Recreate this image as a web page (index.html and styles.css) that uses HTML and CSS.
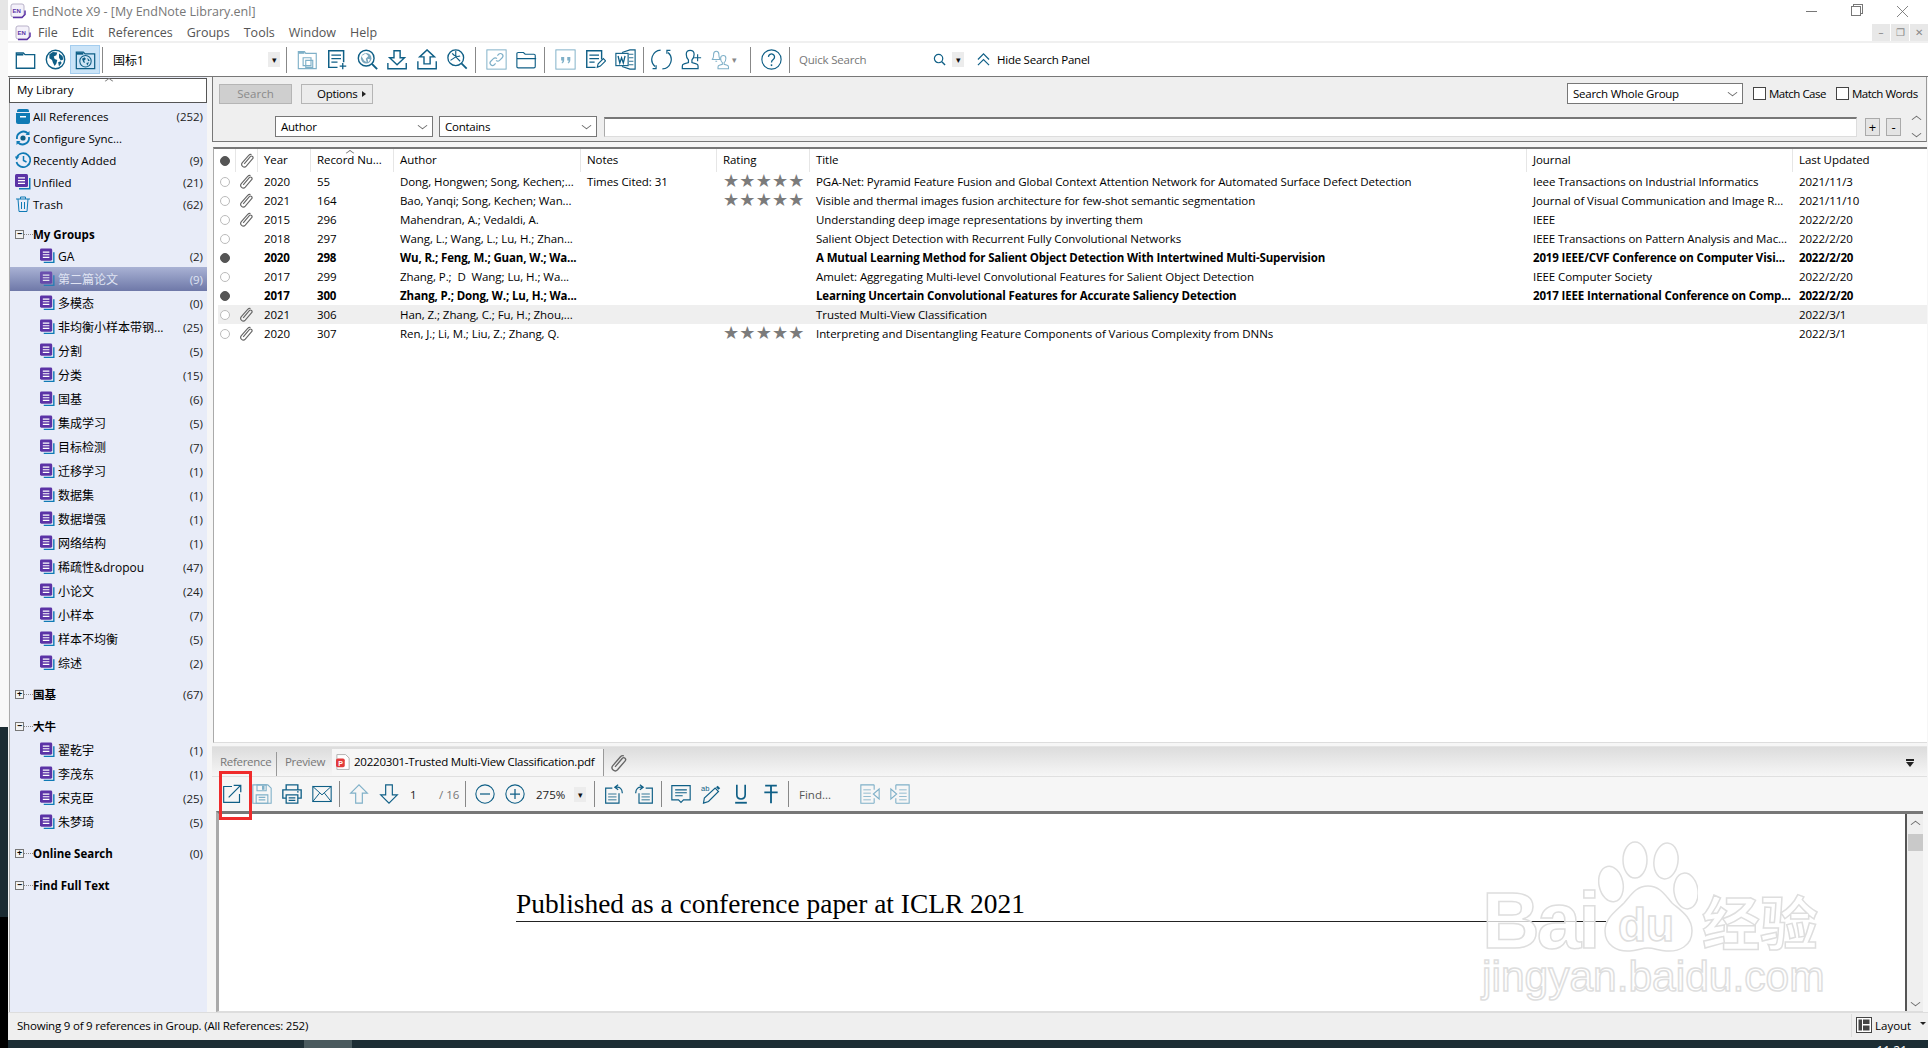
FILE: index.html
```html
<!DOCTYPE html>
<html lang="en">
<head>
    <meta charset="UTF-8">
    <meta name="viewport" content="width=device-width, initial-scale=1.0">
    <title>EndNote X9 - [My EndNote Library.enl]</title>
    <link rel="stylesheet" href="styles.css">
</head>
<body>
<svg class="defs" xmlns="http://www.w3.org/2000/svg">
    <symbol id="i-en" viewBox="0 0 16 16"><rect x="1" y="1" width="13" height="13" rx="2" fill="#f4f1fa" stroke="#b9b2c9"/><path d="M3 14.5h9l3-3v-4" fill="none" stroke="#5b33a6" stroke-width="1.5"/><text x="2.6" y="10.4" class="en-text">EN</text></symbol>
    <symbol id="i-folder" viewBox="0 0 24 24"><path d="M1.5 22V4.5h8l2 2h11V22z" fill="none" stroke="currentColor" stroke-width="1.5"/><path d="M1.5 5h8v2.5h-8z" fill="currentColor"/></symbol>
    <symbol id="i-globe" viewBox="0 0 24 24"><circle cx="12" cy="12" r="10.5" fill="#fff" stroke="currentColor" stroke-width="1.6"/><path d="M5 6l4-2.5 5 .5-1 3-3 1.5 1 3 3 1-1 4-2 3-2-4-1-3-3-2zM16 5l4 3 1 4-3 1-2-3zM15 15l3-1 1 2-3 4z" fill="currentColor"/></symbol>
    <symbol id="i-online" viewBox="0 0 24 24"><path d="M1.5 22.5V3.5h8l2 2h11v17z" fill="none" stroke="currentColor" stroke-width="1.4"/><path d="M1.5 4h8v2.5h-8z" fill="currentColor"/><circle cx="12" cy="14" r="6.5" fill="#cfe5f5" stroke="currentColor" stroke-width="1.2"/><path d="M8 11l3-1.5 1.500 2-2 1.500 1 3-2-1zM14 10l3 3-2 1zM13 16l3-1-2 4z" fill="currentColor"/></symbol>
    <symbol id="i-copy" viewBox="0 0 24 24"><path d="M1.500 22.500V3h7l1.500 2h12v17.500z" fill="none" stroke="currentColor" stroke-width="1.300"/><path d="M1.500 3h7v2.500h-7z" fill="currentColor"/><path d="M7 10h9v9H7zM10 13h8v8h-8z" fill="#fff" stroke="currentColor" stroke-width="1.300"/></symbol>
    <symbol id="i-newref" viewBox="0 0 24 24"><path d="M12 21H2V2h17v13" fill="none" stroke="currentColor" stroke-width="1.700"/><path d="M5 7h11M5 11h11M5 15h7M18 16v7M14.500 19.500h7.500" fill="none" stroke="currentColor" stroke-width="1.500"/></symbol>
    <symbol id="i-findtext" viewBox="0 0 24 24"><circle cx="10.500" cy="10.500" r="9" fill="none" stroke="currentColor" stroke-width="1.600"/><circle cx="10.500" cy="10.500" r="6" fill="currentColor" opacity=".55"/><path d="M5 8l5-3 3 3-3 3 1 4-3-2zM12 11l3 1-2 3z" fill="#fff"/><path d="M17 17l6 6" stroke="currentColor" stroke-width="2.200"/></symbol>
    <symbol id="i-import" viewBox="0 0 24 24"><path d="M8 2h7v8h5l-8.500 8L3 10h5zM1 16v6.500h21V16" fill="none" stroke="currentColor" stroke-width="1.600"/></symbol>
    <symbol id="i-export" viewBox="0 0 24 24"><path d="M8 17V9H3l8.500-8L20 9h-5v8zM1 14v8.500h21V14" fill="none" stroke="currentColor" stroke-width="1.600"/></symbol>
    <symbol id="i-findpdf" viewBox="0 0 24 24"><circle cx="10" cy="10" r="9" fill="none" stroke="currentColor" stroke-width="1.500"/><path d="M10 2v7l5 5M10 9l-6 4M6 5c2 3 6 4 9 3" fill="none" stroke="currentColor" stroke-width="1.300"/><path d="M16.500 16.500l6 6" stroke="currentColor" stroke-width="2"/></symbol>
    <symbol id="i-link" viewBox="0 0 24 24"><rect x="1" y="1" width="22" height="22" fill="none" stroke="currentColor" stroke-width="1.100"/><path d="M11 16.500l-1.500 1.500a2.800 2.800 0 0 1-4-4l3-3a2.800 2.800 0 0 1 4 0M13 7.500L14.500 6a2.800 2.800 0 0 1 4 4l-3 3a2.800 2.800 0 0 1-4 0" fill="none" stroke="currentColor" stroke-width="1.300"/></symbol>
    <symbol id="i-openfolder" viewBox="0 0 24 24"><path d="M1 20V5.500q0-1.500 1.500-1.500h6l2 2h10q1.500 0 1.500 1.500V20q0 1.500-1.500 1.500h-18Q1 21.500 1 20zM1 11h22" fill="none" stroke="currentColor" stroke-width="1.300"/></symbol>
    <symbol id="i-cite" viewBox="0 0 24 24"><rect x="1" y="1" width="22" height="22" fill="none" stroke="currentColor" stroke-width="1.100"/><path d="M7 9h3.500v3.500c0 2-1 3.500-2.500 4l-.5-1c1-.5 1-1.500 1-2.500H7zM14 9h3.500v3.500c0 2-1 3.500-2.500 4l-.5-1c1-.5 1-1.500 1-2.500H14z" fill="currentColor"/></symbol>
    <symbol id="i-editcite" viewBox="0 0 24 24"><path d="M12 21H2V2h17v10" fill="none" stroke="currentColor" stroke-width="1.600"/><path d="M5 7h11M5 11h11M5 15h6" stroke="currentColor" stroke-width="1.500"/><path d="M14 21l1-4 6-6 2.500 2.500-6 6z" fill="#fff" stroke="currentColor" stroke-width="1.300"/></symbol>
    <symbol id="i-word" viewBox="0 0 24 24"><path d="M8 4l9-3h6v22h-6l-9-3" fill="none" stroke="currentColor" stroke-width="1.300"/><path d="M16 6h5M16 10h5M16 14h5M16 18h5" stroke="currentColor"/><rect x="1" y="5" width="14" height="14" fill="#fff" stroke="currentColor" stroke-width="1.300"/><path d="M3.500 8l2 8 2-6 2 6 2-8" fill="none" stroke="currentColor" stroke-width="1.500"/></symbol>
    <symbol id="i-sync" viewBox="0 0 24 24"><path d="M4.500 20A10.800 10.800 0 0 1 11 1.200M19.500 4A10.800 10.800 0 0 1 13 22.800" fill="none" stroke="currentColor" stroke-width="1.400"/><path d="M1.800 22.500h4v-4M22.200 1.500h-4v4" fill="none" stroke="currentColor" stroke-width="1.400"/></symbol>
    <symbol id="i-user" viewBox="0 0 24 24"><path d="M1.500 22.500v-3q0-2 2-2.500l5-1.500v-3C6 10 6 7.500 6 6c0-3 2-4.500 4.500-4.500S15 3 15 6c0 2 0 4-2.500 6.500v3l5 1.500q2 .5 2 2.500v3z" fill="none" stroke="currentColor" stroke-width="1.400"/><path d="M19 6v8M15 10h8" stroke="currentColor" stroke-width="1.300"/></symbol>
    <symbol id="i-bell" viewBox="0 0 24 24"><path d="M1 12c2-1 2-3 2-6 0-2 1.500-3.500 3-3.500S9 4 9 6c0 3 0 5 2 6zM5 14h2" fill="none" stroke="currentColor" stroke-width="1.200"/><path d="M8 22.500v-2q0-1.500 1.500-2l3.500-1v-2c-2-1.500-2-3.500-2-5 0-2 1.500-3 3-3s3 1 3 3c0 1.500 0 3.500-2 5v2l3.500 1q1.500.5 1.500 2v2z" fill="none" stroke="currentColor" stroke-width="1.200"/></symbol>
    <symbol id="i-help" viewBox="0 0 24 24"><circle cx="12" cy="12" r="11" fill="none" stroke="currentColor" stroke-width="1.300"/><path d="M8.500 9a3.500 3.500 0 1 1 5.500 3c-1.500 1-2 1.500-2 3.500" fill="none" stroke="currentColor" stroke-width="1.500"/><path d="M12 17.500v2" stroke="currentColor" stroke-width="1.700"/></symbol>
    <symbol id="i-lens" viewBox="0 0 14 14"><circle cx="6" cy="6" r="4.500" fill="none" stroke="currentColor" stroke-width="1.300"/><path d="M9.500 9.500l3.500 3.500" stroke="currentColor" stroke-width="1.500"/></symbol>
    <symbol id="i-chevrons" viewBox="0 0 14 14"><path d="M1 7l6-6 6 6M1 13l6-6 6 6" fill="none" stroke="currentColor" stroke-width="1.300"/></symbol>
    <symbol id="i-library" viewBox="0 0 16 16"><path d="M2 3q0-2 2-2h8q2 0 2 2v1H2z" fill="#0f7ab5"/><path d="M1 5h14v9q0 2-2 2H3q-2 0-2-2z" fill="#0f7ab5"/><path d="M5 8h6v1.500H5z" fill="#fff"/></symbol>
    <symbol id="i-cfg" viewBox="0 0 16 16"><path d="M2 9A6.500 6.500 0 0 1 13 3.500M14 7A6.500 6.500 0 0 1 3 12.500" fill="none" stroke="#0f7ab5" stroke-width="1.800"/><path d="M14.500 1v4h-4zM1.500 15v-4h4z" fill="#0f7ab5"/><circle cx="8" cy="8" r="2.600" fill="#0f5f86"/></symbol>
    <symbol id="i-recent" viewBox="0 0 16 16"><path d="M2 5A7 7 0 1 1 1.500 10" fill="none" stroke="#0f7ab5" stroke-width="1.700"/><path d="M0 4.500h4.500L1.500 8z" fill="#0f7ab5"/><path d="M8.500 4v4.500l3 1.500" fill="none" stroke="#0f7ab5" stroke-width="1.500"/></symbol>
    <symbol id="i-group" viewBox="0 0 16 16"><path d="M14 4h1.500v11.500H4V14h10z" fill="#0f7ab5"/><rect x="0" y="0" width="13" height="13" rx="1.500" fill="#5b33a6"/><path d="M3 3.200h7v1.300H3zM3 6h7v1.300H3zM3 8.800h7v1.300H3z" fill="#fff"/></symbol>
    <symbol id="i-trash" viewBox="0 0 16 16"><path d="M1 3h14M5.500 3V1h5v2M3 3l1 12.500h8L13 3M6.500 6v7M9.500 6v7" fill="none" stroke="#0f7ab5" stroke-width="1"/></symbol>
    <symbol id="i-clip" viewBox="0 0 16 16"><path d="M4.500 11.500L11 3.800a1.700 1.700 0 0 1 2.500 2.300L6.700 14a2.800 2.800 0 0 1-4.200-3.700L9.300 2.500a3 3 0 0 1 3-.9" fill="none" stroke="#666" stroke-width="1.200"/></symbol>
    <symbol id="i-pdf" viewBox="0 0 16 18"><path d="M1 .5h10l4 4v13H1z" fill="#fff" stroke="#aaa"/><rect x="0" y="5" width="10" height="10" rx="2" fill="#e23b3b"/><text x="2.500" y="13" class="pdf-text">P</text></symbol>
    <symbol id="i-open" viewBox="0 0 24 24"><path d="M12 3H2v19h19V12" fill="none" stroke="currentColor" stroke-width="1.400"/><path d="M8 16L22 2M14 1.500h8.500V10" fill="none" stroke="currentColor" stroke-width="1.500"/></symbol>
    <symbol id="i-save" viewBox="0 0 24 24"><path d="M1 1h18l4 4v18H1z" fill="none" stroke="currentColor" stroke-width="1.300"/><path d="M6 1h11v7H6zM5 13h14v10H5zM8 16h8M8 19h8" fill="none" stroke="currentColor" stroke-width="1.300"/><path d="M12 2h3v5h-3z" fill="currentColor"/></symbol>
    <symbol id="i-print" viewBox="0 0 24 24"><path d="M5 7V1h14v6M5 17H1V7h22v10h-4" fill="none" stroke="currentColor" stroke-width="1.600"/><path d="M5 13h14v10H5zM8 16.500h8M8 19.500h8" fill="none" stroke="currentColor" stroke-width="1.500"/><path d="M18 9.500h2" stroke="currentColor" stroke-width="1.500"/></symbol>
    <symbol id="i-mail" viewBox="0 0 24 24"><rect x="1" y="3" width="22" height="18" fill="none" stroke="currentColor" stroke-width="1.300"/><path d="M1 3l11 10L23 3M1 21l8-10M23 21l-8-10" fill="none" stroke="currentColor" stroke-width="1.200"/></symbol>
    <symbol id="i-up" viewBox="0 0 24 24"><path d="M8 23V11H2L12 1l10 10h-6v12z" fill="none" stroke="currentColor" stroke-width="1.400"/></symbol>
    <symbol id="i-down" viewBox="0 0 24 24"><path d="M8 1v12H2l10 10 10-10h-6V1z" fill="none" stroke="currentColor" stroke-width="1.400"/></symbol>
    <symbol id="i-minus" viewBox="0 0 24 24"><circle cx="12" cy="12" r="11" fill="none" stroke="currentColor" stroke-width="1.300"/><path d="M6 12h12" stroke="currentColor" stroke-width="1.500"/></symbol>
    <symbol id="i-plus" viewBox="0 0 24 24"><circle cx="12" cy="12" r="11" fill="none" stroke="currentColor" stroke-width="1.300"/><path d="M6 12h12M12 6v12" stroke="currentColor" stroke-width="1.500"/></symbol>
    <symbol id="i-rotl" viewBox="0 0 24 24"><path d="M10 5H2v18h16V11" fill="none" stroke="currentColor" stroke-width="1.400"/><path d="M5 12h10M5 15.500h10M5 19h10" stroke="currentColor"/><path d="M22 11c0-5-3-8-8-7M17 1l-4 3 4 3" fill="none" stroke="currentColor" stroke-width="1.500"/></symbol>
    <symbol id="i-rotr" viewBox="0 0 24 24"><path d="M14 5h8v18H6V11" fill="none" stroke="currentColor" stroke-width="1.400"/><path d="M9 12h10M9 15.500h10M9 19h10" stroke="currentColor"/><path d="M2 11c0-5 3-8 8-7M7 1l4 3-4 3" fill="none" stroke="currentColor" stroke-width="1.500"/></symbol>
    <symbol id="i-note" viewBox="0 0 24 24"><path d="M1 2h22v17h-8l-3 3-3-3H1z" fill="none" stroke="currentColor" stroke-width="1.400"/><path d="M5 7h14M5 10.500h14M5 14h9" stroke="currentColor" stroke-width="1.300"/></symbol>
    <symbol id="i-marker" viewBox="0 0 24 24"><path d="M3 23l1-6L17 5l4 4L9 21z" fill="none" stroke="currentColor" stroke-width="1.400"/><path d="M18 4l2-2 3 3-2 2z" fill="currentColor"/><text x="0" y="8" class="ab-text">ab</text></symbol>
    <symbol id="i-underline" viewBox="0 0 16 24"><path d="M3 1v12q0 5 5 5t5-5V1" fill="none" stroke="currentColor" stroke-width="2"/><path d="M1 22.500h14" stroke="currentColor" stroke-width="2.200"/></symbol>
    <symbol id="i-strike" viewBox="0 0 16 24"><path d="M1 2h14M8 2v21M0 10h16" fill="none" stroke="currentColor" stroke-width="2.200"/></symbol>
    <symbol id="i-prevhit" viewBox="0 0 24 24"><path d="M17 1H1v22h16M17 1v6M17 23v-6" fill="none" stroke="currentColor" stroke-width="1.300"/><path d="M4 7h9M4 11h9M4 15h9M4 19h9" stroke="currentColor"/><path d="M23 6l-7 6 7 6z" fill="none" stroke="currentColor" stroke-width="1.300"/></symbol>
    <symbol id="i-nexthit" viewBox="0 0 24 24"><path d="M7 1h16v22H7M7 1v6M7 23v-6" fill="none" stroke="currentColor" stroke-width="1.300"/><path d="M11 7h9M11 11h9M11 15h9M11 19h9" stroke="currentColor"/><path d="M1 6l7 6-7 6z" fill="none" stroke="currentColor" stroke-width="1.300"/></symbol>
    <symbol id="i-layout" viewBox="0 0 16 16"><rect x=".5" y=".5" width="15" height="15" fill="#fff" stroke="#444"/><path d="M2.500 2.500h3.500v11H2.500zM7 2.500h6.500V7H7zM7 8.500h6.500v5H7z" fill="#444"/></symbol>
</svg>

<div class="screen">
    <div class="edge">
        <div class="edge-top"></div>
        <div class="edge-mid"></div>
        <div class="edge-dark"></div>
        <div class="edge-black"></div>
    </div>

    <div class="app">
        <div class="titlebar">
            <svg class="en-icon"><use href="#i-en"/></svg>
            <span class="title-text">EndNote X9 - [My EndNote Library.enl]</span>
            <div class="win-controls">
                <span class="win-min"></span>
                <span class="win-max"></span>
                <svg class="win-close" viewBox="0 0 11 11"><path d="M0 0l11 11M11 0L0 11" stroke="#666" stroke-width=".8"/></svg>
            </div>
        </div>

        <div class="menubar">
            <svg class="en-icon menu-icon"><use href="#i-en"/></svg>
            <span class="menu-item">File</span>
            <span class="menu-item">Edit</span>
            <span class="menu-item">References</span>
            <span class="menu-item">Groups</span>
            <span class="menu-item">Tools</span>
            <span class="menu-item">Window</span>
            <span class="menu-item">Help</span>
            <div class="mdi-controls">
                <span class="mdi-btn">&#8211;</span>
                <span class="mdi-btn">&#10064;</span>
                <span class="mdi-btn">&#10005;</span>
            </div>
        </div>

        <!-- Barra de herramientas -->
        <div class="toolbar">
            <span class="tool"><svg class="ic"><use href="#i-folder"/></svg></span>
            <span class="tool"><svg class="ic"><use href="#i-globe"/></svg></span>
            <span class="tool tool-on"><svg class="ic"><use href="#i-online"/></svg></span>
            <span class="sep sep-first"></span>
            <div class="style-combo">
                <span>国标1</span>
                <span class="mini-drop">&#9662;</span>
            </div>
            <span class="sep"></span>
            <span class="tool dim"><svg class="ic"><use href="#i-copy"/></svg></span>
            <span class="tool"><svg class="ic"><use href="#i-newref"/></svg></span>
            <span class="tool"><svg class="ic"><use href="#i-findtext"/></svg></span>
            <span class="tool"><svg class="ic"><use href="#i-import"/></svg></span>
            <span class="tool"><svg class="ic"><use href="#i-export"/></svg></span>
            <span class="tool"><svg class="ic"><use href="#i-findpdf"/></svg></span>
            <span class="sep"></span>
            <span class="tool dim"><svg class="ic"><use href="#i-link"/></svg></span>
            <span class="tool"><svg class="ic"><use href="#i-openfolder"/></svg></span>
            <span class="sep"></span>
            <span class="tool dim"><svg class="ic"><use href="#i-cite"/></svg></span>
            <span class="tool"><svg class="ic"><use href="#i-editcite"/></svg></span>
            <span class="tool"><svg class="ic"><use href="#i-word"/></svg></span>
            <span class="sep sep-tight"></span>
            <span class="tool"><svg class="ic"><use href="#i-sync"/></svg></span>
            <span class="tool"><svg class="ic"><use href="#i-user"/></svg></span>
            <span class="tool dim"><svg class="ic"><use href="#i-bell"/></svg></span>
            <span class="tiny-arrow">&#9662;</span>
            <span class="sep"></span>
            <span class="tool"><svg class="ic"><use href="#i-help"/></svg></span>
            <span class="sep"></span>
            <div class="quick-search">
                <span class="quick-label">Quick Search</span>
                <svg class="lens"><use href="#i-lens"/></svg>
                <span class="mini-drop">&#9662;</span>
            </div>
            <svg class="chevrons"><use href="#i-chevrons"/></svg>
            <span class="hide-panel">Hide Search Panel</span>
        </div>

        <div class="body">
            <!-- Panel de grupos -->
            <div class="sidebar">
                <div class="lib-box">My Library<span class="caret-up"></span></div>

                <div class="side-row"><svg class="side-ic"><use href="#i-library"/></svg><span class="side-name">All References</span><span class="side-count">(252)</span></div>
                <div class="side-row"><svg class="side-ic"><use href="#i-cfg"/></svg><span class="side-name">Configure Sync...</span></div>
                <div class="side-row"><svg class="side-ic"><use href="#i-recent"/></svg><span class="side-name">Recently Added</span><span class="side-count">(9)</span></div>
                <div class="side-row"><svg class="side-ic"><use href="#i-group"/></svg><span class="side-name">Unfiled</span><span class="side-count">(21)</span></div>
                <div class="side-row"><svg class="side-ic"><use href="#i-trash"/></svg><span class="side-name">Trash</span><span class="side-count">(62)</span></div>

                <div class="side-head"><span class="expander">&#8722;</span><span class="dots"></span><span class="side-name">My Groups</span></div>
                <div class="group-row group-first"><svg class="group-ic"><use href="#i-group"/></svg><span class="side-name">GA</span><span class="side-count">(2)</span></div>
                <div class="group-row selected"><svg class="group-ic"><use href="#i-group"/></svg><span class="side-name">第二篇论文</span><span class="side-count">(9)</span></div>
                <div class="group-row"><svg class="group-ic"><use href="#i-group"/></svg><span class="side-name">多模态</span><span class="side-count">(0)</span></div>
                <div class="group-row"><svg class="group-ic"><use href="#i-group"/></svg><span class="side-name">非均衡小样本带钢...</span><span class="side-count">(25)</span></div>
                <div class="group-row"><svg class="group-ic"><use href="#i-group"/></svg><span class="side-name">分割</span><span class="side-count">(5)</span></div>
                <div class="group-row"><svg class="group-ic"><use href="#i-group"/></svg><span class="side-name">分类</span><span class="side-count">(15)</span></div>
                <div class="group-row"><svg class="group-ic"><use href="#i-group"/></svg><span class="side-name">国基</span><span class="side-count">(6)</span></div>
                <div class="group-row"><svg class="group-ic"><use href="#i-group"/></svg><span class="side-name">集成学习</span><span class="side-count">(5)</span></div>
                <div class="group-row"><svg class="group-ic"><use href="#i-group"/></svg><span class="side-name">目标检测</span><span class="side-count">(7)</span></div>
                <div class="group-row"><svg class="group-ic"><use href="#i-group"/></svg><span class="side-name">迁移学习</span><span class="side-count">(1)</span></div>
                <div class="group-row"><svg class="group-ic"><use href="#i-group"/></svg><span class="side-name">数据集</span><span class="side-count">(1)</span></div>
                <div class="group-row"><svg class="group-ic"><use href="#i-group"/></svg><span class="side-name">数据增强</span><span class="side-count">(1)</span></div>
                <div class="group-row"><svg class="group-ic"><use href="#i-group"/></svg><span class="side-name">网络结构</span><span class="side-count">(1)</span></div>
                <div class="group-row"><svg class="group-ic"><use href="#i-group"/></svg><span class="side-name">稀疏性&amp;dropou</span><span class="side-count">(47)</span></div>
                <div class="group-row"><svg class="group-ic"><use href="#i-group"/></svg><span class="side-name">小论文</span><span class="side-count">(24)</span></div>
                <div class="group-row"><svg class="group-ic"><use href="#i-group"/></svg><span class="side-name">小样本</span><span class="side-count">(7)</span></div>
                <div class="group-row"><svg class="group-ic"><use href="#i-group"/></svg><span class="side-name">样本不均衡</span><span class="side-count">(5)</span></div>
                <div class="group-row"><svg class="group-ic"><use href="#i-group"/></svg><span class="side-name">综述</span><span class="side-count">(2)</span></div>

                <div class="side-head"><span class="expander">+</span><span class="dots"></span><span class="side-name">国基</span><span class="side-count plain">(67)</span></div>

                <div class="side-head head-gap head-open"><span class="expander">&#8722;</span><span class="dots"></span><span class="side-name">大牛</span></div>
                <div class="group-row"><svg class="group-ic"><use href="#i-group"/></svg><span class="side-name">翟乾宇</span><span class="side-count">(1)</span></div>
                <div class="group-row"><svg class="group-ic"><use href="#i-group"/></svg><span class="side-name">李茂东</span><span class="side-count">(1)</span></div>
                <div class="group-row"><svg class="group-ic"><use href="#i-group"/></svg><span class="side-name">宋克臣</span><span class="side-count">(25)</span></div>
                <div class="group-row"><svg class="group-ic"><use href="#i-group"/></svg><span class="side-name">朱梦琦</span><span class="side-count">(5)</span></div>

                <div class="side-head"><span class="expander">+</span><span class="dots"></span><span class="side-name">Online Search</span><span class="side-count plain">(0)</span></div>
                <div class="side-head head-gap"><span class="expander">&#8722;</span><span class="dots"></span><span class="side-name">Find Full Text</span></div>
            </div>

            <div class="main">
                <!-- Panel de búsqueda -->
                <div class="search-panel">
                    <div class="search-row">
                        <span class="btn btn-search">Search</span>
                        <span class="btn btn-options">Options<i class="opt-arrow"></i></span>
                        <div class="select select-scope">Search Whole Group<i class="chev"></i></div>
                        <span class="check"></span><span class="check-label case-label">Match Case</span>
                        <span class="check"></span><span class="check-label">Match Words</span>
                    </div>
                    <div class="search-row field-row">
                        <div class="select select-field">Author<i class="chev"></i></div>
                        <div class="select select-field">Contains<i class="chev"></i></div>
                        <div class="search-input"></div>
                        <span class="small-btn">+</span>
                        <span class="small-btn">-</span>
                        <div class="updown"><i class="chev chev-up"></i><i class="chev"></i></div>
                    </div>
                </div>

                <!-- Lista de referencias -->
                <div class="ref-list">
                    <div class="ref-row ref-head">
                        <div class="cell cell-dot"><span class="dot dot-on"></span></div>
                        <div class="cell cell-clip"><svg class="clip"><use href="#i-clip"/></svg></div>
                        <div class="cell">Year</div>
                        <div class="cell">Record Nu...<span class="caret-up caret-head"></span></div>
                        <div class="cell">Author</div>
                        <div class="cell">Notes</div>
                        <div class="cell">Rating</div>
                        <div class="cell">Title</div>
                        <div class="cell">Journal</div>
                        <div class="cell">Last Updated</div>
                    </div>
                    <div class="ref-row">
                        <div class="cell cell-dot"><span class="dot"></span></div>
                        <div class="cell cell-clip"><svg class="clip"><use href="#i-clip"/></svg></div>
                        <div class="cell">2020</div>
                        <div class="cell">55</div>
                        <div class="cell">Dong, Hongwen; Song, Kechen;...</div>
                        <div class="cell">Times Cited: 31</div>
                        <div class="cell stars">★★★★★</div>
                        <div class="cell">PGA-Net: Pyramid Feature Fusion and Global Context Attention Network for Automated Surface Defect Detection</div>
                        <div class="cell">Ieee Transactions on Industrial Informatics</div>
                        <div class="cell">2021/11/3</div>
                    </div>
                    <div class="ref-row">
                        <div class="cell cell-dot"><span class="dot"></span></div>
                        <div class="cell cell-clip"><svg class="clip"><use href="#i-clip"/></svg></div>
                        <div class="cell">2021</div>
                        <div class="cell">164</div>
                        <div class="cell">Bao, Yanqi; Song, Kechen; Wan...</div>
                        <div class="cell"></div>
                        <div class="cell stars">★★★★★</div>
                        <div class="cell">Visible and thermal images fusion architecture for few-shot semantic segmentation</div>
                        <div class="cell">Journal of Visual Communication and Image R...</div>
                        <div class="cell">2021/11/10</div>
                    </div>
                    <div class="ref-row">
                        <div class="cell cell-dot"><span class="dot"></span></div>
                        <div class="cell cell-clip"><svg class="clip"><use href="#i-clip"/></svg></div>
                        <div class="cell">2015</div>
                        <div class="cell">296</div>
                        <div class="cell">Mahendran, A.; Vedaldi, A.</div>
                        <div class="cell"></div>
                        <div class="cell"></div>
                        <div class="cell">Understanding deep image representations by inverting them</div>
                        <div class="cell">IEEE</div>
                        <div class="cell">2022/2/20</div>
                    </div>
                    <div class="ref-row">
                        <div class="cell cell-dot"><span class="dot"></span></div>
                        <div class="cell cell-clip"></div>
                        <div class="cell">2018</div>
                        <div class="cell">297</div>
                        <div class="cell">Wang, L.; Wang, L.; Lu, H.; Zhan...</div>
                        <div class="cell"></div>
                        <div class="cell"></div>
                        <div class="cell">Salient Object Detection with Recurrent Fully Convolutional Networks</div>
                        <div class="cell">IEEE Transactions on Pattern Analysis and Mac...</div>
                        <div class="cell">2022/2/20</div>
                    </div>
                    <div class="ref-row unread">
                        <div class="cell cell-dot"><span class="dot dot-on"></span></div>
                        <div class="cell cell-clip"></div>
                        <div class="cell">2020</div>
                        <div class="cell">298</div>
                        <div class="cell">Wu, R.; Feng, M.; Guan, W.; Wa...</div>
                        <div class="cell"></div>
                        <div class="cell"></div>
                        <div class="cell">A Mutual Learning Method for Salient Object Detection With Intertwined Multi-Supervision</div>
                        <div class="cell">2019 IEEE/CVF Conference on Computer Visi...</div>
                        <div class="cell">2022/2/20</div>
                    </div>
                    <div class="ref-row">
                        <div class="cell cell-dot"><span class="dot"></span></div>
                        <div class="cell cell-clip"></div>
                        <div class="cell">2017</div>
                        <div class="cell">299</div>
                        <div class="cell">Zhang, P.;  D  Wang; Lu, H.; Wa...</div>
                        <div class="cell"></div>
                        <div class="cell"></div>
                        <div class="cell">Amulet: Aggregating Multi-level Convolutional Features for Salient Object Detection</div>
                        <div class="cell">IEEE Computer Society</div>
                        <div class="cell">2022/2/20</div>
                    </div>
                    <div class="ref-row unread">
                        <div class="cell cell-dot"><span class="dot dot-on"></span></div>
                        <div class="cell cell-clip"></div>
                        <div class="cell">2017</div>
                        <div class="cell">300</div>
                        <div class="cell">Zhang, P.; Dong, W.; Lu, H.; Wa...</div>
                        <div class="cell"></div>
                        <div class="cell"></div>
                        <div class="cell">Learning Uncertain Convolutional Features for Accurate Saliency Detection</div>
                        <div class="cell">2017 IEEE International Conference on Comp...</div>
                        <div class="cell">2022/2/20</div>
                    </div>
                    <div class="ref-row current">
                        <div class="cell cell-dot"><span class="dot"></span></div>
                        <div class="cell cell-clip"><svg class="clip"><use href="#i-clip"/></svg></div>
                        <div class="cell">2021</div>
                        <div class="cell">306</div>
                        <div class="cell">Han, Z.; Zhang, C.; Fu, H.; Zhou,...</div>
                        <div class="cell"></div>
                        <div class="cell"></div>
                        <div class="cell">Trusted Multi-View Classification</div>
                        <div class="cell"></div>
                        <div class="cell">2022/3/1</div>
                    </div>
                    <div class="ref-row">
                        <div class="cell cell-dot"><span class="dot"></span></div>
                        <div class="cell cell-clip"><svg class="clip"><use href="#i-clip"/></svg></div>
                        <div class="cell">2020</div>
                        <div class="cell">307</div>
                        <div class="cell">Ren, J.; Li, M.; Liu, Z.; Zhang, Q.</div>
                        <div class="cell"></div>
                        <div class="cell stars">★★★★★</div>
                        <div class="cell">Interpreting and Disentangling Feature Components of Various Complexity from DNNs</div>
                        <div class="cell"></div>
                        <div class="cell">2022/3/1</div>
                    </div>
                </div>

                <!-- Panel inferior -->
                <div class="bottom-pane">
                    <div class="tabs">
                        <span class="tab">Reference</span>
                        <span class="tab tab-last">Preview</span>
                        <div class="tab-active">
                            <svg class="pdf-ic"><use href="#i-pdf"/></svg>
                            <span>20220301-Trusted Multi-View Classification.pdf</span>
                        </div>
                        <svg class="tab-clip" viewBox="0 0 16 16"><use href="#i-clip"/></svg>
                        <span class="tab-menu"></span>
                    </div>
                    <div class="pdf-tools">
                        <span class="ptool"><svg class="ic-p"><use href="#i-open"/></svg></span>
                        <span class="ptool dim"><svg class="ic-p"><use href="#i-save"/></svg></span>
                        <span class="ptool"><svg class="ic-p"><use href="#i-print"/></svg></span>
                        <span class="ptool"><svg class="ic-p"><use href="#i-mail"/></svg></span>
                        <span class="sep"></span>
                        <span class="ptool dim"><svg class="ic-p"><use href="#i-up"/></svg></span>
                        <span class="ptool"><svg class="ic-p"><use href="#i-down"/></svg></span>
                        <span class="page-now">1</span>
                        <span class="page-all">/ 16</span>
                        <span class="sep"></span>
                        <span class="ptool"><svg class="ic-p"><use href="#i-minus"/></svg></span>
                        <span class="ptool"><svg class="ic-p"><use href="#i-plus"/></svg></span>
                        <span class="zoom-val">275%</span>
                        <span class="mini-drop zoom-drop">&#9662;</span>
                        <span class="sep"></span>
                        <span class="ptool"><svg class="ic-p"><use href="#i-rotl"/></svg></span>
                        <span class="ptool"><svg class="ic-p"><use href="#i-rotr"/></svg></span>
                        <span class="sep"></span>
                        <span class="ptool"><svg class="ic-p"><use href="#i-note"/></svg></span>
                        <span class="ptool"><svg class="ic-p"><use href="#i-marker"/></svg></span>
                        <span class="ptool"><svg class="ic-u"><use href="#i-underline"/></svg></span>
                        <span class="ptool"><svg class="ic-u"><use href="#i-strike"/></svg></span>
                        <span class="sep"></span>
                        <span class="find-label">Find...</span>
                        <span class="ptool dim"><svg class="ic-p"><use href="#i-prevhit"/></svg></span>
                        <span class="ptool dim"><svg class="ic-p"><use href="#i-nexthit"/></svg></span>
                        <span class="red-box"></span>
                    </div>
                    <div class="pdf-view">
                        <div class="pdf-page">
                            <p class="pdf-head">Published as a conference paper at ICLR 2021</p>
                            <div class="pdf-rule"></div>
                        </div>
                        <div class="pdf-scroll">
                            <i class="chev chev-up"></i>
                            <span class="scroll-thumb"></span>
                            <i class="chev"></i>
                        </div>
                        <!-- Marca de agua -->
                        <div class="watermark">
                            <span class="wm-bai">Bai</span>
                            <svg class="wm-paw" viewBox="0 0 100 111">
                                <ellipse cx="13" cy="43" rx="12" ry="18" transform="rotate(-12 13 43)"/>
                                <ellipse cx="37" cy="19" rx="12" ry="18"/>
                                <ellipse cx="68" cy="20" rx="12" ry="18" transform="rotate(8 68 20)"/>
                                <ellipse cx="88" cy="50" rx="12" ry="18" transform="rotate(-8 88 50)"/>
                                <path d="M50 45c12 0 17 9 24 17 8 7 20 14 20 28 0 15-13 21-26 20-7-.5-12-3-18-3s-11 2.500-18 3C19 111 7 104 7 90c0-13 11-20 19-28 7-8 12-17 24-17z"/>
                            </svg>
                            <span class="wm-du">du</span>
                            <span class="wm-cn">经验</span>
                            <span class="wm-url">jingyan.baidu.com</span>
                        </div>
                    </div>
                </div>
            </div>
        </div>

        <div class="statusbar">
            <span class="status-text">Showing 9 of 9 references in Group. (All References: 252)</span>
            <div class="layout-btn">
                <svg class="layout-ic"><use href="#i-layout"/></svg>
                <span>Layout</span>
                <span class="layout-arrow"></span>
            </div>
        </div>

        <div class="taskbar">
            <span class="task-item"></span>
            <span class="task-time">11:21</span>
        </div>
    </div>
</div>
</body>
</html>
```

FILE: styles.css
```css
* {
    box-sizing: border-box;
}
html, body {
    margin: 0;
    padding: 0;
    height: 100%;
    overflow: hidden;
}
body {
    font-family: "Open Sans", "Noto Sans CJK SC", sans-serif;
    font-size: 11.5px;
    color: #000;
    background-color: #fff;
}
.defs {
    display: none;
}
.en-text {
    font-family: "Liberation Sans", sans-serif;
    font-size: 6px;
    font-weight: bold;
    fill: #5b33a6;
}
.pdf-text {
    font-family: "Liberation Sans", sans-serif;
    font-size: 8px;
    font-weight: bold;
    fill: #fff;
}
.ab-text {
    font-family: "Liberation Sans", sans-serif;
    font-size: 9px;
    fill: currentColor;
}
.screen {
    display: flex;
    width: 1928px;
    height: 1048px;
}

/* franja izquierda */
.edge {
    width: 8px;
    display: flex;
    flex-direction: column;
}
.edge-top {
    height: 30px;
    background-color: #e6e6e6;
}
.edge-mid {
    height: 697px;
    background-color: #f8f8f8;
}
.edge-dark {
    height: 190px;
    background-color: #1c2c33;
}
.edge-black {
    flex: 1;
    background-color: #000;
}
.app {
    flex: 1;
    min-width: 0;
    display: flex;
    flex-direction: column;
}

/* barra de titulo y menu */
.titlebar {
    height: 20px;
    display: flex;
    align-items: center;
    padding: 2px 0 0 2px;
}
.en-icon {
    width: 16px;
    height: 16px;
}
.title-text {
    margin-left: 6px;
    color: #777;
    font-size: 12.5px;
}
.win-controls {
    margin-left: auto;
    display: flex;
    align-items: center;
    padding-right: 20px;
}
.win-min {
    width: 11px;
    height: 1px;
    background-color: #777;
}
.win-max {
    width: 10px;
    height: 10px;
    margin-left: 34px;
    border: 1px solid #777;
    box-shadow: 2px -2px 0 -1px #fff, 2px -2px 0 0 #777;
}
.win-close {
    width: 11px;
    height: 11px;
    margin-left: 36px;
}
.menubar {
    height: 21px;
    display: flex;
    align-items: center;
    padding: 4px 0 0 7px;
}
.menu-icon {
    margin-right: 7px;
}
.menu-item {
    color: #555;
    font-size: 12.5px;
    margin-right: 14px;
}
.mdi-controls {
    margin-left: auto;
    display: flex;
    gap: 1px;
}
.mdi-btn {
    width: 18px;
    height: 17px;
    background-color: #e8e8e8;
    color: #888;
    font-size: 10px;
    line-height: 17px;
    text-align: center;
}

/* barra de herramientas */
.toolbar {
    height: 35px;
    border-top: 2px solid #f0f0f0;
    display: flex;
    align-items: center;
    padding-left: 2px;
    color: #0f5f86;
}
.tool {
    width: 30px;
    height: 29px;
    display: flex;
    align-items: center;
    justify-content: center;
    flex: none;
}
.tool-on {
    background-color: #cbe4f8;
    border: 1px solid #a4cdef;
}
.dim {
    color: #7fb0c8;
}
.ic {
    width: 21px;
    height: 21px;
}
.sep {
    width: 1px;
    height: 26px;
    margin: 0 5px 0 3px;
    background-color: #888;
    flex: none;
}
.sep-first {
    margin: 0;
    margin-left: 2px;
}
.sep-tight {
    margin-right: 2px;
}
.style-combo {
    width: 167px;
    margin-left: 10px;
    margin-right: 3px;
    display: flex;
    align-items: center;
    justify-content: space-between;
    color: #000;
    font-size: 12px;
}
.mini-drop {
    width: 12px;
    height: 15px;
    background-color: #ececec;
    color: #111;
    font-size: 9px;
    line-height: 15px;
    text-align: center;
    flex: none;
}
.tiny-arrow {
    color: #888;
    font-size: 9px;
    margin-left: -4px;
    margin-right: 10px;
}
.quick-search {
    width: 165px;
    margin-left: 4px;
    display: flex;
    align-items: center;
}
.quick-label {
    color: #777;
    letter-spacing: -.2px;
}
.lens {
    width: 13px;
    height: 13px;
    margin-left: auto;
    margin-right: 6px;
}
.chevrons {
    width: 13px;
    height: 13px;
    margin-left: 13px;
}
.hide-panel {
    margin-left: 7px;
    color: #000;
    letter-spacing: -.25px;
}

/* layout general */
.body {
    height: 936px;
    display: flex;
    border-top: 1px solid #777;
    background-color: #f6f6f6;
}
.sidebar {
    width: 198px;
    margin-left: 1px;
    border-left: 1px solid #aaa;
    background-color: #e8ecf8;
}
.lib-box {
    position: relative;
    height: 25px;
    margin: 1px 0 2px -1px;
    padding-left: 7px;
    line-height: 22px;
    background-color: #fff;
    border: 1px solid #555;
}
.caret-up {
    position: absolute;
    left: 96px;
    top: -1px;
    width: 6px;
    height: 6px;
    border-left: 1px solid #777;
    border-top: 1px solid #777;
    transform: scale(1, .7) rotate(45deg);
}
.side-row {
    height: 22px;
    display: flex;
    align-items: center;
    padding: 0 4px 0 5px;
}
.side-ic {
    width: 16px;
    height: 16px;
    margin-right: 2px;
    flex: none;
}
.side-count {
    margin-left: auto;
    color: #222;
    font-size: 11.5px;
}
.side-name {
    white-space: nowrap;
}
.side-head {
    height: 22px;
    margin-top: 8px;
    display: flex;
    align-items: center;
    padding: 0 4px 0 5px;
    font-weight: bold;
}
.head-gap {
    margin-top: 10px;
}
.head-open {
    margin-bottom: 1px;
}
.side-count.plain {
    font-weight: normal;
}
.expander {
    width: 9px;
    height: 9px;
    border: 1px solid #777;
    background-color: #f2f2f2;
    font-size: 9px;
    line-height: 6px;
    font-weight: bold;
    text-align: center;
    flex: none;
}
.dots {
    width: 9px;
    border-top: 1px dotted #888;
    flex: none;
}
.group-row {
    height: 24px;
    display: flex;
    align-items: center;
    padding: 0 4px 0 30px;
    font-size: 12px;
}
.group-first {
    height: 22px;
}
.group-ic {
    width: 15px;
    height: 16px;
    margin-right: 3px;
    flex: none;
}
.selected {
    background: linear-gradient(#a9b2d4, #6e78a8);
    color: #dfe3f2;
}
.selected .side-count {
    color: #dfe3f2;
}
.selected .group-ic {
    opacity: .75;
}

/* panel de busqueda */
.main {
    width: 1715px;
    margin-left: 5px;
    display: flex;
    flex-direction: column;
}
.search-panel {
    height: 65px;
    padding: 6px 12px 0 6px;
    background-color: #efefef;
    border-left: 1px solid #777;
    border-bottom: 1px solid #777;
    border-right: 1px solid #999;
}
.search-row {
    display: flex;
    align-items: center;
    height: 21px;
}
.btn {
    height: 20px;
    line-height: 18px;
    border: 1px solid #b5b5b5;
}
.btn-search {
    width: 73px;
    text-align: center;
    background-color: #cfcfcf;
    color: #8a8a8a;
}
.btn-options {
    position: relative;
    width: 72px;
    margin-left: 9px;
    padding-left: 15px;
    letter-spacing: -.3px;
    background-color: #ececec;
}
.opt-arrow {
    position: absolute;
    right: 6px;
    top: 6px;
    border-left: 4px solid #222;
    border-top: 3px solid transparent;
    border-bottom: 3px solid transparent;
}
.select {
    position: relative;
    height: 21px;
    padding-left: 5px;
    line-height: 20px;
    background-color: #fff;
    border: 1px solid #777;
    letter-spacing: -.25px;
}
.select .chev {
    position: absolute;
    right: 6px;
    top: 5px;
}
.chev {
    display: block;
    width: 7px;
    height: 7px;
    border-right: 1.500px solid #666;
    border-bottom: 1.500px solid #666;
    transform: scale(1, .75) rotate(45deg);
}
.chev-up {
    transform: scale(1, .75) rotate(225deg);
}
.select-scope {
    width: 176px;
    margin-left: auto;
    margin-right: 10px;
}
.check {
    width: 13px;
    height: 13px;
    background-color: #fff;
    border: 1px solid #444;
    margin-right: 3px;
    flex: none;
}
.check-label {
    width: 62px;
    white-space: nowrap;
    letter-spacing: -.5px;
}
.case-label {
    width: 55px;
    margin-right: 12px;
}
.field-row {
    margin-top: 12px;
    margin-right: -12px;
    padding-left: 56px;
}
.select-field {
    width: 158px;
    margin-right: 6px;
    flex: none;
}
.select-field + .select-field {
    margin-right: 7px;
}
.search-input {
    width: 1253px;
    height: 20px;
    flex: none;
    background-color: #fff;
    border-top: 2px solid #777;
    border-left: 1px solid #aaa;
    border-right: 1px solid #ddd;
    border-bottom: 1px solid #ddd;
}
.small-btn {
    width: 15px;
    height: 18px;
    margin-left: 8px;
    line-height: 16px;
    text-align: center;
    background-color: #e4e4e4;
    border: 1px solid #aaa;
    font-size: 13px;
    flex: none;
}
.small-btn + .small-btn {
    margin-left: 6px;
}
.updown {
    margin-left: 12px;
    display: flex;
    flex-direction: column;
    gap: 7px;
}

/* lista de referencias */
.ref-list {
    height: 596px;
    margin-top: 5px;
    margin-left: 1px;
    padding-left: 4px;
    background-color: #fff;
    border-top: 2px solid #777;
    border-left: 1px solid #aaa;
    border-bottom: 1px solid #ddd;
}
.ref-row {
    display: grid;
    grid-template-columns: 17px 22px 53px 83px 187px 136px 93px 717px 266px 89px;
    height: 19px;
    line-height: 19px;
    white-space: pre;
    letter-spacing: -.07px;
}
.ref-head {
    height: 23px;
    line-height: 22px;
}
.ref-head .cell {
    position: relative;
    border-left: 1px solid #e6e6e6;
}
.ref-head .cell-dot {
    border-left: 0;
}
.caret-head {
    left: 36px;
    top: 1px;
}
.cell {
    padding-left: 6px;
    border-left: 1px solid transparent;
    overflow: hidden;
}
.cell-dot, .cell-clip {
    padding: 0;
    border: 0;
    display: flex;
    align-items: center;
}
.cell-clip {
    padding-left: 4px;
}
.dot {
    width: 10px;
    height: 10px;
    margin-left: 2px;
    border-radius: 50%;
    border: 1px solid #bbb;
    background-color: #fff;
}
.dot-on {
    background-color: #555;
    border-color: #555;
}
.clip {
    width: 15px;
    height: 15px;
}
.stars {
    font-family: "DejaVu Sans", sans-serif;
    font-size: 18px;
    letter-spacing: .2px;
    line-height: 18px;
    color: #7b7b7b;
    overflow: visible;
}
.unread {
    font-weight: bold;
    letter-spacing: -.14px;
}
.current {
    background-color: #efefef;
}

/* panel inferior */
.bottom-pane {
    flex: 1;
    display: flex;
    flex-direction: column;
    min-height: 0;
    margin-top: 3px;
}
.tabs {
    position: relative;
    height: 30px;
    display: flex;
    align-items: flex-end;
    padding-left: 1px;
    background: linear-gradient(#dcdcdc, #f6f6f6);
    border-top: 1px solid #e4e4e4;
    white-space: nowrap;
}
.tab {
    width: 64px;
    height: 24px;
    padding-left: 7px;
    line-height: 20px;
    color: #777;
    letter-spacing: -.3px;
    border-right: 1px solid #999;
}
.tab-last {
    border-right: 0;
    width: 55px;
    padding-left: 8px;
}
.tab-active {
    height: 27px;
    width: 272px;
    display: flex;
    align-items: center;
    gap: 4px;
    padding: 0 0 2px 4px;
    letter-spacing: -.22px;
    background-color: #f6f6f6;
    border-right: 1px solid #999;
}
.pdf-ic {
    width: 14px;
    height: 16px;
}
.tab-clip {
    width: 18px;
    height: 18px;
    margin: 0 0 4px 6px;
}
.tab-menu {
    position: absolute;
    right: 13px;
    top: 12px;
    width: 8px;
    height: 7px;
    border-top: 2px solid #222;
}
.tab-menu::after {
    content: "";
    position: absolute;
    left: 0;
    top: 1px;
    border-top: 5px solid #222;
    border-left: 4px solid transparent;
    border-right: 4px solid transparent;
}
.pdf-tools {
    position: relative;
    z-index: 1;
    height: 35px;
    display: flex;
    align-items: center;
    padding-left: 5px;
    color: #0f5f86;
    border-top: 1px solid #e0e0e0;
}
.pdf-tools .sep {
    margin: 0 4px 0 2px;
}
.ptool {
    width: 30px;
    height: 24px;
    display: flex;
    align-items: center;
    justify-content: center;
    flex: none;
}
.ic-p {
    width: 20px;
    height: 20px;
}
.ic-u {
    width: 14px;
    height: 20px;
}
.page-now {
    margin-left: 6px;
    width: 29px;
    color: #222;
}
.page-all {
    width: 24px;
    color: #777;
}
.zoom-val {
    margin-left: 6px;
    width: 38px;
    color: #222;
}
.zoom-drop {
    margin-right: 6px;
}
.find-label {
    width: 56px;
    margin-left: 6px;
    color: #555;
}
.red-box {
    position: absolute;
    left: 7px;
    top: -6px;
    width: 33px;
    height: 49px;
    border: 3px solid #ef2b2b;
}
.pdf-view {
    position: relative;
    flex: 1;
    min-height: 0;
    display: flex;
    margin: 0 4px 0 4px;
    border-top: 3px solid #777;
    border-left: 3px solid #aaa;
    border-bottom: 1px solid #ddd;
    overflow: hidden;
}
.pdf-page {
    flex: 1;
    padding-left: 297px;
    background-color: #fff;
}
.pdf-head {
    margin: 0;
    padding-top: 75px;
    font-family: "Liberation Serif", serif;
    font-size: 27.4px;
    line-height: 30px;
}
.pdf-rule {
    width: 1090px;
    height: 1px;
    margin-top: 2px;
    background-color: #222;
}
.pdf-scroll {
    width: 18px;
    display: flex;
    flex-direction: column;
    align-items: center;
    padding-top: 7px;
    background-color: #efefef;
    border-left: 2px solid #555;
}
.pdf-scroll .chev:last-child {
    margin-top: auto;
    margin-bottom: 5px;
}
.scroll-thumb {
    width: 15px;
    height: 17px;
    margin-top: 6px;
    background-color: #c9c9c9;
}

/* marca de agua */
.watermark {
    position: absolute;
    left: 0;
    top: 0;
    right: 0;
    bottom: 0;
    pointer-events: none;
}
.watermark span {
    position: absolute;
    color: rgba(255, 255, 255, .75);
    -webkit-text-stroke: 1.500px #dedede;
    font-family: "Liberation Sans", sans-serif;
    font-weight: bold;
    white-space: nowrap;
}
.wm-bai {
    left: 1263px;
    top: 61px;
    font-size: 80px;
    line-height: 92px;
    letter-spacing: -3px;
}
.wm-paw {
    position: absolute;
    left: 1379px;
    top: 27px;
    width: 100px;
    height: 111px;
    fill: rgba(255, 255, 255, .75);
    stroke: #dedede;
    stroke-width: 1.500;
}
.wm-du {
    left: 1399px;
    top: 88px;
    font-size: 46px;
    line-height: 46px;
}
.watermark .wm-cn {
    left: 1483px;
    top: 68px;
    font-family: "Noto Sans CJK SC", sans-serif;
    font-size: 58px;
    line-height: 76px;
}
.watermark .wm-url {
    left: 1263px;
    top: 138px;
    font-weight: normal;
    font-size: 42.5px;
    line-height: 50px;
}

/* barra de estado */
.statusbar {
    height: 28px;
    display: flex;
    align-items: center;
    padding-left: 9px;
    padding-bottom: 3px;
    background-color: #efefef;
    border-top: 1px solid #ddd;
}
.status-text {
    letter-spacing: -.2px;
}
.layout-btn {
    margin-left: auto;
    height: 23px;
    display: flex;
    align-items: center;
    padding-left: 4px;
    border-left: 1px solid #ddd;
    width: 77px;
    position: relative;
}
.layout-ic {
    width: 16px;
    height: 16px;
    margin-right: 3px;
}
.layout-arrow {
    position: absolute;
    right: 2px;
    top: 8px;
    border-top: 3px solid #222;
    border-left: 3px solid transparent;
    border-right: 3px solid transparent;
}
.taskbar {
    flex: 1;
    display: flex;
    position: relative;
    overflow: hidden;
    background-color: #1c2d34;
}
.task-item {
    width: 48px;
    margin-left: 296px;
    background-color: #4a5a5e;
}
.task-time {
    position: absolute;
    right: 21px;
    top: 4px;
    color: #fff;
    font-size: 12px;
    line-height: 14px;
}
```
